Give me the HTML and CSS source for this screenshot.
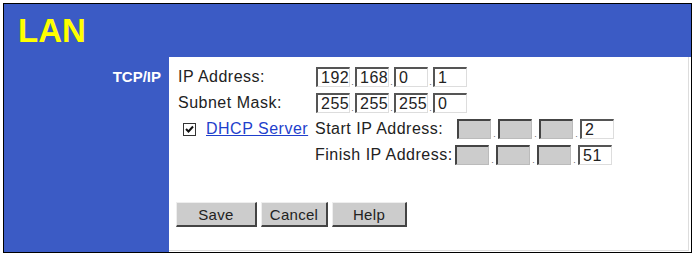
FILE: index.html
```html
<!DOCTYPE html>
<html>
<head>
<meta charset="utf-8">
<link rel="stylesheet" href="styles.css">
</head>
<body>
<div class="frame">
  <div class="header"><span class="title">LAN</span></div>
  <div class="main">
    <div class="side"><span class="side-label">TCP/IP</span></div>
    <div class="content">
      <div class="row">
        <span class="label label-ip">IP Address:</span>
        <div class="ip">
          <span class="box">192</span><span class="dot">.</span><span class="box">168</span><span class="dot">.</span><span class="box">0</span><span class="dot">.</span><span class="box">1</span>
        </div>
      </div>
      <div class="row">
        <span class="label label-ip">Subnet Mask:</span>
        <div class="ip">
          <span class="box">255</span><span class="dot">.</span><span class="box">255</span><span class="dot">.</span><span class="box">255</span><span class="dot">.</span><span class="box">0</span>
        </div>
      </div>
      <div class="row">
        <div class="dhcp">
          <span class="check"><svg width="9" height="9" viewBox="0 0 9 9"><path d="M1 4 L3.5 6.5 L8 1.5" fill="none" stroke="#111" stroke-width="2"/></svg></span>
          <a class="link" href="#">DHCP Server</a>
        </div>
        <span class="label label-range">Start IP Address:</span>
        <div class="ip ip-wide">
          <span class="box off"></span><span class="dot">.</span><span class="box off"></span><span class="dot">.</span><span class="box off"></span><span class="dot">.</span><span class="box">2</span>
        </div>
      </div>
      <div class="row row-indent">
        <span class="label label-finish">Finish IP Address:</span>
        <div class="ip ip-wide">
          <span class="box off"></span><span class="dot">.</span><span class="box off"></span><span class="dot">.</span><span class="box off"></span><span class="dot">.</span><span class="box">51</span>
        </div>
      </div>
      <div class="buttons">
        <button class="btn btn-save">Save</button>
        <button class="btn btn-cancel">Cancel</button>
        <button class="btn btn-help">Help</button>
      </div>
    </div>
  </div>
</div>
</body>
</html>
```

FILE: styles.css
```css
html, body {
  margin: 0;
  padding: 0;
  background: #ffffff;
}

body {
  font-family: "Liberation Sans", Arial, sans-serif;
  color: #222222;
  font-size: 16px;
}

.frame {
  margin: 3px 0 0 3px;
  width: 687px;
  height: 248px;
  border: 1px solid #000000;
  display: flex;
  flex-direction: column;
  background: #ffffff;
}

.header {
  height: 53px;
  background: #3b5bc5;
  display: flex;
  align-items: center;
  padding-left: 14px;
}

.title {
  color: #ffff00;
  font-weight: bold;
  font-size: 33px;
  line-height: 1;
  margin-top: 0;
}

.main {
  flex: 1;
  display: flex;
}

.side {
  width: 165px;
  background: #3b5bc5;
  text-align: right;
  padding: 10px 8px 0 0;
  box-sizing: border-box;
}

.side-label {
  color: #ffffff;
  font-weight: bold;
  font-size: 15px;
  line-height: 20px;
}

.content {
  flex: 1;
  padding: 10px 0 0 9px;
  border-right: 1px solid #dddddd;
  border-bottom: 1px solid #dddddd;
  margin: 0 2px 1px 0;
}

.row {
  display: flex;
  align-items: center;
  height: 20px;
  margin-bottom: 6px;
}

.row-indent {
  padding-left: 137px;
}

.label {
  line-height: 20px;
  white-space: nowrap;
  letter-spacing: 0.5px;
}

.label-ip {
  width: 138px;
}

.label-range {
  width: 142px;
}

.label-finish {
  width: 140px;
}

.dhcp {
  width: 137px;
  display: flex;
  align-items: center;
  padding-left: 5px;
  box-sizing: border-box;
}

.check {
  width: 11px;
  height: 11px;
  border: 1px solid #333;
  background: #fff;
  display: flex;
  align-items: center;
  justify-content: center;
  margin-right: 10px;
}

.link {
  color: #1f3fcc;
  text-decoration: underline;
  letter-spacing: 0.5px;
  white-space: nowrap;
}

.ip {
  display: flex;
  align-items: flex-end;
}

.box {
  width: 34px;
  height: 20px;
  box-sizing: border-box;
  border-style: solid;
  border-width: 2px 1px 1px 2px;
  border-color: #555555 #dddddd #dddddd #555555;
  background: #ffffff;
  font-size: 16px;
  line-height: 17px;
  padding-left: 3px;
  letter-spacing: 0.5px;
  color: #222;
}

.box.off {
  background: #cccccc;
  border-color: #444444 #bbbbbb #bbbbbb #444444;
}

.dot {
  width: 5px;
  text-align: center;
  font-size: 9px;
  line-height: 9px;
  color: #666;
}

.ip-wide .dot {
  width: 7px;
}

.buttons {
  display: flex;
  gap: 4px;
  margin-top: 37px;
  margin-left: -2px;
}

.btn {
  font-family: "Liberation Sans", Arial, sans-serif;
  font-size: 15px;
  letter-spacing: 0.3px;
  color: #222;
  height: 25px;
  background: #cccccc;
  border-style: solid;
  border-width: 1px 2px 2px 1px;
  border-color: #eeeeee #444444 #444444 #eeeeee;
  padding: 0;
}

.btn-save { width: 81px; }
.btn-cancel { width: 67px; }
.btn-help { width: 75px; }
```
